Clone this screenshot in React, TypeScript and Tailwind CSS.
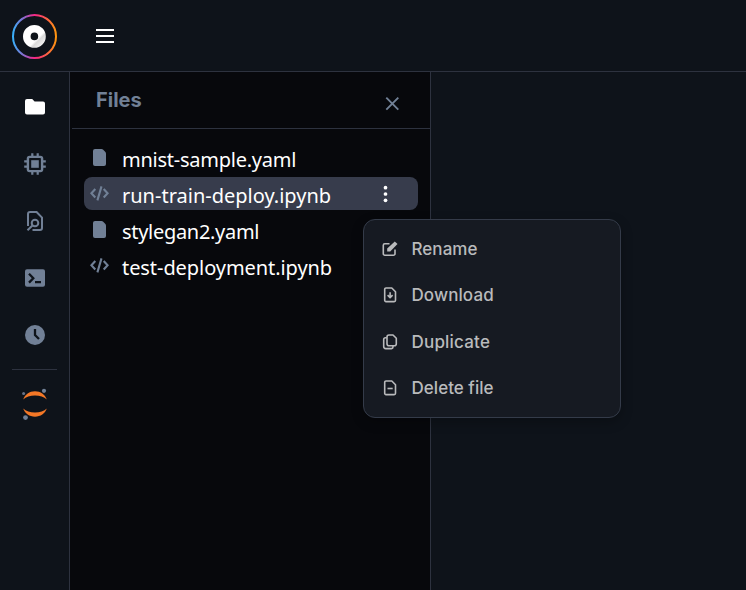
import type { ReactNode } from "react";

function Logo() {
  return (
    <svg width="45" height="45" viewBox="0 0 45 45" fill="none">
      <defs>
        <linearGradient id="ring" x1="0" y1="22" x2="45" y2="22" gradientUnits="userSpaceOnUse">
          <stop offset="0" stopColor="#32b6ff" />
          <stop offset="0.28" stopColor="#9064c8" />
          <stop offset="0.5" stopColor="#f72585" />
          <stop offset="0.75" stopColor="#fb5a4b" />
          <stop offset="1" stopColor="#ff9a0a" />
        </linearGradient>
        <linearGradient id="disc" x1="14" y1="14" x2="31" y2="31" gradientUnits="userSpaceOnUse">
          <stop offset="0.64" stopColor="#fff" />
          <stop offset="0.74" stopColor="#dadada" />
          <stop offset="1" stopColor="#f5f5f5" />
        </linearGradient>
      </defs>
      <circle cx="22.5" cy="22.5" r="21.5" stroke="url(#ring)" strokeWidth="2" />
      <circle cx="22.4" cy="22.4" r="7.6" stroke="url(#disc)" strokeWidth="7.6" />
    </svg>
  );
}

function FileIcon() {
  return (
    <svg width="13" height="17" viewBox="0 0 13 17" className="ml-[3px]">
      <path d="M2 0h6.500q1 0 1.700.7l2.200 2.400q.6.700.6 1.600V15a2 2 0 0 1-2 2H2a2 2 0 0 1-2-2V2a2 2 0 0 1 2-2Z" fill="#718096" />
    </svg>
  );
}

function CodeIcon() {
  return (
    <svg width="19" height="15" viewBox="0 0 19 15" fill="none" stroke="#718096" strokeWidth="2.1">
      <path d="M5.300 3 1.400 7.300l3.900 4.200M13.700 3l3.900 4.300-3.900 4.200M11.500.4 7.400 14.400" />
    </svg>
  );
}

function MenuItem({ label, icon, spacing }: { label: string; icon: ReactNode; spacing: string }) {
  return (
    <div className="flex h-[46.3px] items-center">
      <svg width="16" height="16" viewBox="0 0 16 16" fill="none" stroke="#b9babc" strokeWidth="1.6" strokeLinejoin="round">
        {icon}
      </svg>
      <span className={"ml-[13.5px] whitespace-nowrap " + spacing}>{label}</span>
    </div>
  );
}

const files = [
  { name: "mnist-sample.yaml", code: false, active: false, spacing: "tracking-[-0.25px]" },
  { name: "run-train-deploy.ipynb", code: true, active: true, spacing: "tracking-[0px]" },
  { name: "stylegan2.yaml", code: false, active: false, spacing: "tracking-[-0.3px]" },
  { name: "test-deployment.ipynb", code: true, active: false, spacing: "tracking-[-0.07px]" },
];

export default function App() {
  return (
    <div className="relative flex h-[590px] w-[746px] flex-col overflow-hidden bg-[#0e131a]">
      <header className="flex h-[72px] shrink-0 items-center border-b border-[#2d323f] pt-[2px] pl-3">
        <Logo />
        <svg className="mb-[2px] ml-[39px]" width="18" height="14" viewBox="0 0 18 14" fill="#fff">
          <path d="M0 0h18v2H0zM0 6h18v2H0zM0 12h18v2H0z" />
        </svg>
      </header>
      <div className="flex min-h-0 flex-1">
        <nav className="flex w-[70px] shrink-0 flex-col items-center border-r border-[#2d323f] pt-[23px]">
          <svg width="24" height="24" viewBox="0 0 24 24" fill="#fff">
            <path d="M4 4h5.200l2.400 2.400H20a2 2 0 0 1 2 2V17.500a2 2 0 0 1-2 2H4a2 2 0 0 1-2-2V6a2 2 0 0 1 2-2Z" />
          </svg>
          <svg className="mt-[33px]" width="24" height="24" viewBox="0 0 24 24" fill="none" stroke="#718096">
            <rect x="4.900" y="4.900" width="14.200" height="14.200" rx="1.800" strokeWidth="2.400" />
            <rect x="8.200" y="8.200" width="7.600" height="7.600" fill="#718096" stroke="none" />
            <path strokeWidth="2.200" d="M9.300 1.200v3M14.700 1.200v3M9.300 19.800v3M14.700 19.800v3M1.200 9.300h3M1.200 14.700h3M19.800 9.300h3M19.800 14.700h3" />
          </svg>
          <svg className="mt-[33px]" width="24" height="24" viewBox="0 0 24 24" fill="none" stroke="#718096" strokeWidth="2">
            <path d="M5 17V5a2 2 0 0 1 2-2h6.600L19 8.600V19a2 2 0 0 1-2 2H9.500" />
            <circle cx="12" cy="14" r="3.300" />
            <path d="m9.700 16.300-5.200 5" />
          </svg>
          <svg className="mt-[33px]" width="24" height="24" viewBox="0 0 24 24" fill="none">
            <rect x="2" y="3.200" width="20" height="17.600" rx="2" fill="#718096" />
            <path d="m6 7.800 4.300 4.400L6 16.600M12 16.200h6" stroke="#0e131a" strokeWidth="2.300" />
          </svg>
          <svg className="mt-[33px]" width="24" height="24" viewBox="0 0 24 24" fill="none">
            <circle cx="12" cy="12" r="10" fill="#718096" />
            <path d="M12 6v6l4 4" stroke="#0e131a" strokeWidth="2.300" />
          </svg>
          <div className="mt-[22px] h-px w-[45px] bg-[#2d323f]" />
          <svg className="mt-[18px]" width="26" height="32" viewBox="0 0 26 32">
            <g fill="#f37726">
              <path d="M1.200 11.500C3 6.500 7.400 3.300 13 3.300s10 3.200 11.800 8.200C22 8.800 18 7.600 13 7.600S4 8.800 1.200 11.500Z" />
              <path d="M1.200 20.500C4 23.200 8 24.400 13 24.400s9-1.200 11.800-3.900C23 25.500 18.600 28.700 13 28.700S3 25.500 1.200 20.500Z" />
            </g>
            <circle cx="1.600" cy="5.400" r="1.500" fill="#687386" />
            <circle cx="22" cy="2.800" r="2.100" fill="#718096" />
            <circle cx="3.500" cy="29.600" r="2.400" fill="#718096" />
          </svg>
        </nav>

        <section className="w-[361px] shrink-0 border-r border-[#2d323f] bg-[#07080c] pl-[2px]">
          <div className="flex h-[57px] items-center justify-between border-b border-[#2d323f] pr-[31px] pl-[24px]">
            <h2 className="font-['Inter',sans-serif] text-[20px] leading-7 font-bold text-[#718096]">Files</h2>
            <svg className="mt-[7px]" width="14" height="14" viewBox="0 0 14 14" stroke="#718096" strokeWidth="1.900">
              <path d="m1.300.7 12 12M13.300.7l-12 12" />
            </svg>
          </div>
          <div className="flex flex-col gap-[3px] pt-[12px] pr-3 pl-3">
            {files.map((f) => (
              <div
                key={f.name}
                className={"flex h-[33px] items-center rounded-lg pl-[6px] " + (f.active ? "bg-[#373c4c]" : "")}
              >
                <div className="flex w-[32px] items-center">{f.code ? <CodeIcon /> : <FileIcon />}</div>
                <span
                  className={
                    "mt-[5px] font-['Noto_Sans',sans-serif] text-[20px] leading-[28px] whitespace-nowrap text-white " + f.spacing
                  }
                >
                  {f.name}
                </span>
                {f.active && (
                  <svg className="mr-[30px] ml-auto" width="5" height="18" viewBox="0 0 5 18" fill="#fff">
                    <circle cx="2.500" cy="2.700" r="1.850" />
                    <circle cx="2.500" cy="9" r="1.850" />
                    <circle cx="2.500" cy="15.300" r="1.850" />
                  </svg>
                )}
              </div>
            ))}
          </div>
        </section>
        <main className="flex-1" />
      </div>

      <div className="absolute top-[219px] left-[363px] h-[199px] w-[258px] rounded-xl border border-[#343b49] bg-[#161a22] pt-[6px] pl-[18px] font-['Inter',sans-serif] text-[17px] font-medium text-[#b9babc] shadow-[0_4px_12px_rgba(0,0,0,0.25)]">
        <MenuItem
          label="Rename"
          spacing="mt-[2px] tracking-[0.05px]"
          icon={
            <>
              <path d="M7.500 2.800H2.800a1.500 1.500 0 0 0-1.500 1.500V12.700A1.500 1.500 0 0 0 2.800 14.200h8.700A1.500 1.500 0 0 0 13 12.700V8.500" />
              <path d="M5.200 10.600v-3L12.800.6l2.700 2.500-7.300 7.500Z" fill="#b9babc" stroke="none" />
            </>
          }
        />
        <MenuItem
          label="Download"
          spacing="tracking-[0.1px]"
          icon={
            <>
              <path d="M4 1h5.800l3.700 3.800v8.500a1.300 1.300 0 0 1-1.300 1.300H4a1.300 1.300 0 0 1-1.300-1.300v-11A1.300 1.300 0 0 1 4 1Z" />
              <path d="M8.100 5.300v5M5.600 8.100l2.500 2.500 2.500-2.500" />
            </>
          }
        />
        <MenuItem
          label="Duplicate"
          spacing="mt-[2px] tracking-[0.2px]"
          icon={
            <>
              <path d="M7 1h4l3.300 3.300v5.400a2 2 0 0 1-2 2H7a2 2 0 0 1-2-2V3a2 2 0 0 1 2-2Z" />
              <path d="M4.800 3.800H3.500a1.800 1.800 0 0 0-1.800 1.800v7A2 2 0 0 0 3.700 14.600h5.800A1.500 1.500 0 0 0 11 13.100v-1.200" />
            </>
          }
        />
        <MenuItem
          label="Delete file"
          spacing="mt-[2px] tracking-[0.03px]"
          icon={
            <>
              <path d="M4 1h5.800l3.700 3.800v8.500a1.300 1.300 0 0 1-1.300 1.300H4a1.300 1.300 0 0 1-1.300-1.300v-11A1.300 1.300 0 0 1 4 1Z" />
              <path d="M5.500 8.500h5.200" />
            </>
          }
        />
      </div>
    </div>
  );
}
